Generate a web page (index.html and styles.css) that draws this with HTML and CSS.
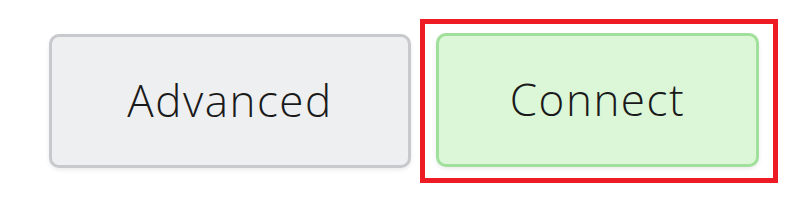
FILE: index.html
```html
<!DOCTYPE html>
<html lang="en">
<head>
    <meta charset="UTF-8">
    <title>Connect</title>
    <link rel="stylesheet" href="styles.css">
</head>
<body>
    <div class="actions">
        <button class="btn btn-advanced">Advanced</button>
        <div class="highlight">
            <button class="btn btn-connect">Connect</button>
        </div>
    </div>
</body>
</html>
```

FILE: styles.css
```css
body {
    margin: 0;
    background: #fff;
    font-family: "Open Sans", Arial, sans-serif;
}
.actions {
    display: flex;
    align-items: center;
    padding: 19px 0 0 49px;
}
.btn {
    box-sizing: border-box;
    height: 134px;
    border-radius: 10px;
    border: 3px solid;
    font-family: inherit;
    font-size: 44px;
    font-weight: 350;
    color: #1a1a1a;
    letter-spacing: 1.5px;
    padding: 0 0 3px;
    box-shadow: 0 2px 4px rgba(0, 0, 0, 0.08);
    cursor: pointer;
}
.btn-advanced {
    width: 362px;
    background: #eeeff1;
    border-color: #c8c9cc;
}
.highlight {
    margin-left: 9px;
    border: 5px solid #ed1c24;
    padding: 9px 14px 11px 11px;
    display: flex;
}
.btn-connect {
    width: 323px;
    background: #dcf7d8;
    border-color: #a0e09b;
}
```
